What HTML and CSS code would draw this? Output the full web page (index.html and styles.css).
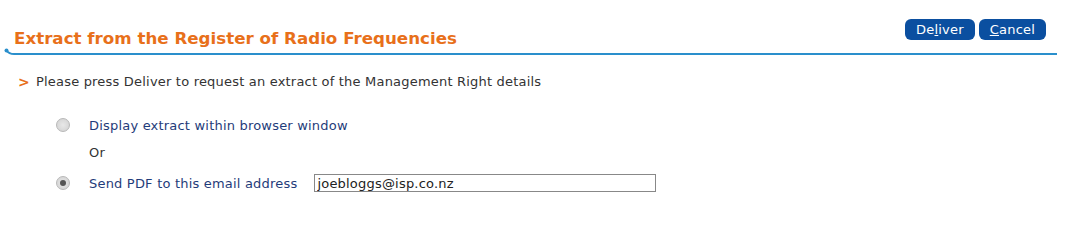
FILE: index.html
```
<!DOCTYPE html>
<html>
<head>
<meta charset="utf-8">
<link rel="stylesheet" href="styles.css">
</head>
<body>
<div class="page">
  <div class="header">
    <h1 class="title">Extract from the Register of Radio Frequencies</h1>
    <div class="buttons">
      <button class="btn">De<u>l</u>iver</button>
      <button class="btn"><u>C</u>ancel</button>
    </div>
  </div>
  <div class="rule">
    <svg class="hook" width="20" height="8" viewBox="0 0 20 8"><circle cx="2.5" cy="2.5" r="2" fill="#2a8fcc"/><path d="M2.5 2.5 Q5 6 10 6 L20 6" stroke="#2a8fcc" stroke-width="2" fill="none"/></svg>
    <div class="line"></div>
  </div>
  <p class="intro"><span class="arrow">&gt;</span>Please press Deliver to request an extract of the Management Right details</p>
  <div class="options">
    <label class="opt"><span class="radio"></span><span class="lbl">Display extract within browser window</span></label>
    <div class="or">Or</div>
    <label class="opt"><span class="radio checked"></span><span class="lbl">Send PDF to this email address</span><input class="email" type="text" value="joebloggs@isp.co.nz"></label>
  </div>
</div>
</body>
</html>
```
FILE: styles.css
```
body { margin: 0; background: #fff; font-family: "DejaVu Sans", Verdana, sans-serif; font-size: 13px; letter-spacing: 0.2px; color: #333; }
.page { padding: 0 10px 0 4px; }
.header { display: flex; justify-content: space-between; align-items: flex-end; height: 47px; }
.title { margin: 0 0 -1px 10px; font-size: 16.7px; font-weight: bold; color: #e8701a; line-height: 20px; letter-spacing: 0; }
.buttons { display: flex; gap: 4px; align-self: flex-start; margin-top: 19px; margin-right: 11px; }
.btn { font-family: inherit; font-size: 13px; letter-spacing: 0.2px; color: #fff; background: #0b4fa0; border: none; border-radius: 6px; height: 21px; padding: 0 11px; line-height: 21px; }
.rule { display: flex; align-items: flex-start; height: 8px; margin-top: 1px; }
.hook { display: block; flex: none; }
.line { flex: 1; height: 2px; background: #2a8fcc; margin-top: 5px; }
.intro { margin: 18px 0 0 14px; display: flex; align-items: center; line-height: 16px; }
.arrow { color: #e8701a; font-weight: bold; margin-right: 6px; font-size: 14px; }
.options { margin: 25px 0 0 52px; }
.opt { display: flex; align-items: center; height: 20px; }
.radio { width: 12px; height: 12px; border-radius: 50%; border: 1px solid #b8b8b8; background: radial-gradient(circle, #e8e8e8 0, #d0d0d0 100%); margin-right: 19px; position: relative; }
.radio.checked::after { content: ""; position: absolute; left: 3px; top: 3px; width: 6px; height: 6px; border-radius: 50%; background: #555; }
.lbl { color: #1f3c7a; }
.or { margin: 10px 0 12px 33px; height: 16px; line-height: 16px; }
.email { margin-left: 17px; width: 336px; height: 14px; border: 1px solid #888; font-family: inherit; font-size: 13px; letter-spacing: 0.2px; padding: 1px 2px; color: #222; }
```
